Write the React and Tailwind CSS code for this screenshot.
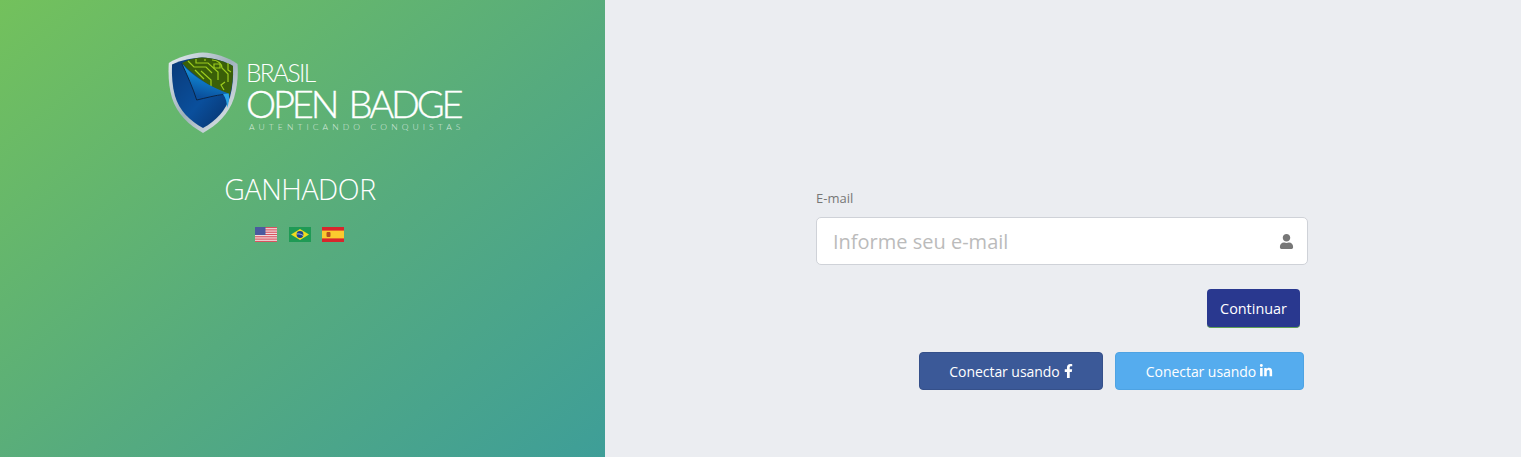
import React from "react";
import { FaUser, FaFacebookF, FaLinkedinIn } from "react-icons/fa";

function Shield() {
  return (
    <svg width="70" height="82" viewBox="0 0 70 82" className="shrink-0">
      <defs>
        <linearGradient id="rim" x1="0" y1="0" x2="1" y2="1">
          <stop offset="0" stopColor="#e8eef2" />
          <stop offset="0.5" stopColor="#9fb0bb" />
          <stop offset="1" stopColor="#eef2f4" />
        </linearGradient>
        <linearGradient id="blue" x1="0" y1="0" x2="1" y2="1">
          <stop offset="0" stopColor="#0a3a78" />
          <stop offset="0.55" stopColor="#0a4f9c" />
          <stop offset="1" stopColor="#082f66" />
        </linearGradient>
        <linearGradient id="fold" x1="0.6" y1="0.05" x2="0.35" y2="0.9">
          <stop offset="0" stopColor="#25a8ec" />
          <stop offset="0.5" stopColor="#0f78c4" />
          <stop offset="1" stopColor="#0a4f9c" />
        </linearGradient>
      </defs>
      <path d="M35 0.5 C24 1 10 5 0.8 11 C0 24 1 36 4 46 C9 62 21 73 35 81 C49 73 61 62 66 46 C69 36 70.5 24 69.5 12 C60 5 46 1 35 0.5 Z" fill="url(#rim)" />
      <path d="M34 5.5 C25 6 13 8 4 12.5 C3.5 24 4.5 35 7 44 C11 58 22 69 35 76 C48 69 58 58 62 45 C64.5 36 65.5 25 65 14 C57 9 44 6 34 5.5 Z" fill="url(#blue)" />
      <path d="M14 11 C20 7.5 28 5.8 34 5.5 C44 6 57 9 65 14 C65.4 24 64.5 34 61.5 44 C45 36 28 26 14 11 Z" fill="#3a5f08" />
      <g stroke="#9ccc1e" strokeWidth="1.2" fill="none">
        <path d="M20 9 L26 15 L38 15 L44 21" />
        <path d="M28 7 L28 11 L40 11 L50 20 L50 28" />
        <path d="M44 8 C50 8 54 12 54 16 L60 22 L60 30" />
        <path d="M33 19 L43 28 L43 34" />
        <path d="M57 30 L53 33 L56 38" />
        <path d="M46 12 L52 12 L52 16 L46 16 Z" />
        <path d="M27 18 L36 27" />
        <path d="M60 11 L60 18 L63 20" />
        <path d="M37 7 L37 9" />
      </g>
      <path d="M13.7 11.3 C24 24 42 35 60.5 41.5 C60.5 44 59 44 56 43 C46 44 38 46 28.7 48 C25 36 19 23 13.7 11.3 Z" fill="url(#fold)" />
      <path d="M13.7 11.3 C19 23 25 36 28.7 48 C38 46 48 43 56 42.5" fill="none" stroke="#0b2547" strokeWidth="1" />
      <path d="M55 42 L60.8 41.5 C61.5 46 60.8 52 59 56 C59 51 58 46 55 42 Z" fill="#2ba4e6" />
    </svg>
  );
}

function UsFlag() {
  return (
    <svg width="22" height="15" viewBox="0 0 22 15" className="mr-[1px] shrink-0">
      <rect width="22" height="15" fill="#f3e9e9" />
      {[0, 2.3, 4.6, 6.9, 9.2, 11.5, 13.8].map((y) => (
        <rect key={y} y={y} width="22" height="1.2" fill="#d9525f" />
      ))}
      <rect width="10.5" height="8" fill="#4a5a9e" />
    </svg>
  );
}

function BrFlag() {
  return (
    <svg width="22" height="15" viewBox="0 0 22 15" className="shrink-0">
      <rect width="22" height="15" fill="#1f9a55" />
      <path d="M11 2 L20 7.5 L11 13 L2 7.5 Z" fill="#f0dc20" />
      <circle cx="11" cy="7.5" r="3.4" fill="#1f3f8f" />
      <path d="M7.8 7 C10 6.6 12.4 7.2 14.2 8.6" stroke="#fff" strokeWidth="0.6" fill="none" />
    </svg>
  );
}

function EsFlag() {
  return (
    <svg width="22" height="15" viewBox="0 0 22 15" className="shrink-0">
      <rect width="22" height="15" fill="#d8262c" />
      <rect y="3.6" width="22" height="7.8" fill="#fbca2e" />
      <rect x="4.5" y="5" width="4" height="5" rx="1" fill="#b5501f" />
    </svg>
  );
}

export default function App() {
  return (
    <div className="flex h-[457px] w-full overflow-hidden bg-[#ebedf1] font-['Open_Sans',sans-serif]">
      <aside className="flex w-[605px] shrink-0 flex-col items-center bg-[linear-gradient(141deg,#73c15c_0%,#56ab7e_55%,#3e9e98_100%)] pt-[52px] pr-[5px] text-white">
        <div className="ml-[31px] flex h-[82px] w-[295px] items-start gap-[8px]">
          <Shield />
          <div className="flex flex-col font-['Lato',sans-serif] font-light whitespace-nowrap">
            <span className="mt-[7px] h-[27px] text-[24.5px] leading-[27px] tracking-[-1.65px]">BRASIL</span>
            <span className="h-[36px] text-[38px] leading-[35px] font-light tracking-[-3.1px] [word-spacing:5px] [-webkit-text-stroke:0.4px_white]">OPEN BADGE</span>
            <span className="ml-[3px] h-[11px] text-[8.5px] leading-[11px] tracking-[4.1px] text-white/75">AUTENTICANDO CONQUISTAS</span>
          </div>
        </div>
        <h1 className="mt-[35px] text-[28.5px] leading-[40px] font-light tracking-[-0.4px]">GANHADOR</h1>
        <div className="mt-[18px] -ml-[2px] flex items-center gap-[11px]">
          <UsFlag />
          <BrFlag />
          <EsFlag />
        </div>
      </aside>

      <main className="flex min-w-0 flex-1 flex-col items-start pt-[190px] pl-[211px]">
        <label className="text-[13px] leading-[17px] text-[#777]">E-mail</label>
        <div className="mt-[10px] flex h-[48px] w-[492px] items-center justify-between rounded-[5px] border border-[#cfd2d8] bg-white pr-[13px] pl-[16px]">
          <span className="pt-[2px] text-[20px] text-[#bbbbbb]">Informe seu e-mail</span>
          <FaUser className="text-[15px] text-[#777]" />
        </div>
        <div className="mt-[24px] flex w-[484px] justify-end">
          <button className="h-[39px] w-[93px] rounded-[4px] border-b border-b-[#5f9f55] bg-[#29388f] pt-[1px] text-[14.4px] font-medium text-white">
            Continuar
          </button>
        </div>
        <div className="mt-[24px] flex w-[488px] justify-end gap-[12px]">
          <button className="flex h-[38px] w-[184px] items-center justify-center gap-[4px] rounded-[4px] border border-[#35508a] bg-[#3b5998] text-[14px] tracking-[-0.05px] text-white">
            Conectar usando <FaFacebookF className="h-[14px] w-[9px]" />
          </button>
          <button className="flex h-[38px] w-[189px] items-center justify-center gap-[3px] rounded-[4px] border border-[#4ea3e3] bg-[#55acee] text-[14px] tracking-[-0.05px] text-white">
            Conectar usando <FaLinkedinIn className="text-[14px]" />
          </button>
        </div>
      </main>
    </div>
  );
}
